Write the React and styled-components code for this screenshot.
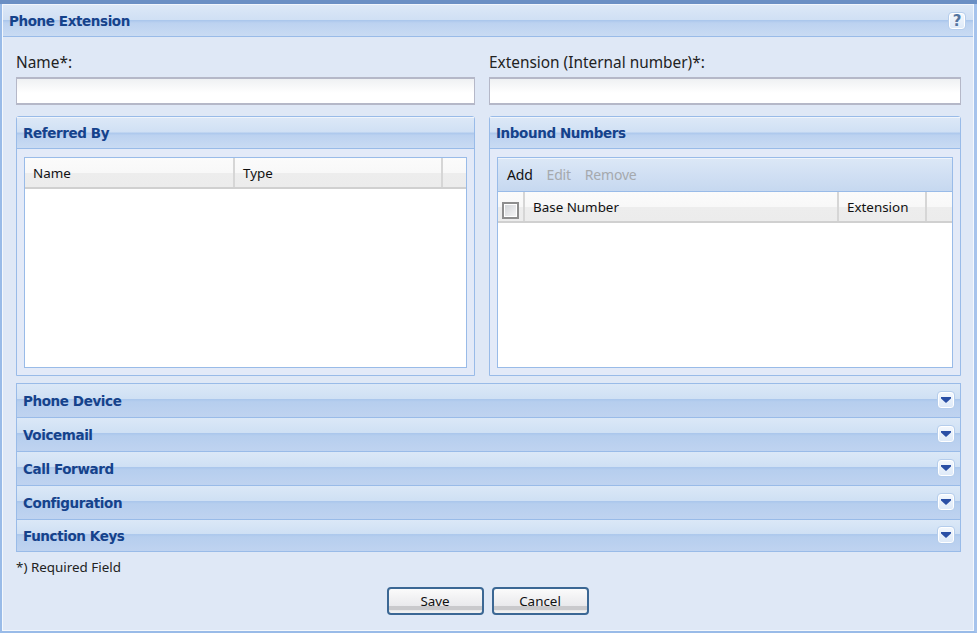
import React from "react";
import styled, { createGlobalStyle } from "styled-components";

const Global = createGlobalStyle`
  html, body { margin: 0; padding: 0; background: #dfe8f6; }
  body { width: 977px; height: 633px; overflow: hidden; font-family: "DejaVu Sans", sans-serif; }
`;
const headerBg = "linear-gradient(to bottom,#dce8f7 0%,#d0e0f4 47%,#abc7ec 50%,#bcd2f0 58%,#c9dbf3 100%)";

const Page = styled.div`
  width: 977px; height: 633px; box-sizing: border-box;
  border-top: 4px solid #6a8fc4;
  background: #dfe8f6;
`;
const Window = styled.div`
  height: 629px; box-sizing: border-box;
  border-left: 2px solid #99bbe8; border-right: 3px solid #a6c3ec; border-bottom: 2px solid #99bbe8;
  display: flex; flex-direction: column;
`;
const Frame = styled.div`
  flex: 1; box-sizing: border-box; display: flex; flex-direction: column;
  border-left: 1px solid #f4f8fd; border-right: 1px solid #f4f8fd; border-bottom: 1px solid #f4f8fd;
`;
const Header = styled.div`
  height: ${p => p.$h || 32}px; box-sizing: border-box; flex: none;
  display: flex; align-items: center; justify-content: space-between;
  padding: 0 ${p => p.$pr ?? 6}px 0 ${p => p.$pl ?? 6}px;
  background: ${headerBg};
  border-top: 1px solid #f0f5fc;
  border-bottom: 1px solid #99bbe8;
`;
const Title = styled.span`
  font: bold 13.5px "DejaVu Sans", sans-serif; color: #15428b; letter-spacing: -0.4px;
`;
const ToolIcon = styled.div`
  width: 18px; height: 18px; box-sizing: border-box; border-radius: 4px;
  border: 1px solid #b5cdec; background: linear-gradient(#f4f8fd,#dde9f8);
  box-shadow: inset 0 0 0 1px #ffffff;
  display: flex; align-items: center; justify-content: center;
  font: bold 15px "DejaVu Sans", sans-serif; color: #53749f;
`;
const ArrowIcon = styled(ToolIcon)`margin-bottom: 1px;`;
const Body = styled.div`
  flex: 1; display: flex; flex-direction: column; padding: 13px 0 0 13px;
`;
const Columns = styled.div`
  display: grid; grid-template-columns: 459px 472px; column-gap: 14px;
`;
const Field = styled.div`display: flex; flex-direction: column;`;
const Label = styled.label`
  font: 15.4px/25px "Noto Sans", sans-serif; height: 27px; color: #222;
`;
const Input = styled.div`
  height: 28px; box-sizing: border-box; border: 1px solid #b5b8c8; border-width: 2px 1px 2px 1px;
  background: linear-gradient(#eff1f3, #fff 14px);
`;
const Panel = styled.div`
  margin-top: 11px; height: 260px; box-sizing: border-box;
  border: 1px solid #99bbe8; border-radius: 3px 3px 0 0; display: flex; flex-direction: column;
`;
const PanelBody = styled.div`
  flex: 1; padding: 8px 7px 7px 7px; background: #e3eaf8; display: flex;
`;
const Grid = styled.div`
  flex: 1; background: #fff; border: 1px solid #99bbe8; display: flex; flex-direction: column;
`;
const Toolbar = styled.div`
  height: 34px; flex: none; box-sizing: border-box; display: flex; align-items: center; gap: 14px;
  padding: 0 0 2px 9px; background: linear-gradient(#dbe7f6,#c6d8f0); border-bottom: 1px solid #99bbe8;
  border-top: 1px solid #f0f5fc;
`;
const Tool = styled.span`
  font: 14px "Noto Sans", sans-serif; letter-spacing: -0.2px; color: ${p => p.$off ? "#a5a9ae" : "#111"};
`;
const HeadRow = styled.div`
  height: ${p => p.$h}px; flex: none; display: flex; box-sizing: border-box;
  background: linear-gradient(#fbfbfb 0%,#f8f8f8 50%,#ededed 52%,#ececec 100%);
  border-bottom: 2px solid #d0d0d0;
`;
const Col = styled.div`
  width: ${p => p.$w}px; ${p => p.$grow ? "flex:1;" : "flex:none;"} box-sizing: border-box;
  padding-left: ${p => p.$pl ?? 8}px; display: flex; align-items: center;
  border-right: ${p => p.$last ? "none" : "2px solid #d6d6d6"};
  font: 13.4px "Noto Sans", sans-serif; color: #111;
`;
const Check = styled.div`
  width: 17px; height: 17px; box-sizing: border-box; border: 2px solid #8e8e8e;
  background: linear-gradient(135deg,#cfd2d6,#f7f7f7); margin-top: 7px;
  box-shadow: inset 0 0 0 1px #fff;
`;
const Collapsed = styled.div`margin-top: 7px; width: 945px; display: flex; flex-direction: column;`;
const Bar = styled(Header)`
  height: 34px; border: 1px solid #99bbe8; border-bottom: 0;
  padding: 0 5px 0 6px;
  &:last-child { border-bottom: 1px solid #99bbe8; height: 33px; }
  background: linear-gradient(to bottom,#dbe8f7 0%,#cfe0f4 44%,#abc7ec 47%,#b6ceee 54%,#bfd3f0 100%);
`;
const Required = styled.div`
  font: 13.4px/16px "Noto Sans", sans-serif; color: #222; margin-top: 7px;
`;
const Footer = styled.div`
  display: flex; justify-content: center; gap: 8px; margin-top: 12px; width: 943px;
`;
const Button = styled.button`
  width: 97px; height: 28px; box-sizing: border-box; padding: 0;
  border: 2px solid #3b6794; border-radius: 4px;
  background: linear-gradient(#fbfbfb 0%,#e9e9ec 70%,#c9c9cc 72%,#c9c9cc 88%,#f0f0f0 90%);
  font: 13.4px "Noto Sans", sans-serif; color: #111;
`;

const Arrow = () => (
  <ArrowIcon>
    <svg width="10" height="6" viewBox="0 0 10 6"><path d="M0 0h10v1.5L5 6 0 1.5z" fill="#2a4fa5" /></svg>
  </ArrowIcon>
);

export default function App() {
  return (
    <Page>
      <Global />
      <Window>
        <Frame>
          <Header $h={33} $pl={6} $pr={7}>
            <Title>Phone Extension</Title>
            <ToolIcon>?</ToolIcon>
          </Header>
          <Body>
            <Columns>
              <Field><Label>Name*:</Label><Input /></Field>
              <Field><Label>Extension (Internal number)*:</Label><Input /></Field>
              <Panel>
                <Header><Title>Referred By</Title></Header>
                <PanelBody>
                  <Grid>
                    <HeadRow $h={31}>
                      <Col $w={210}>Name</Col>
                      <Col $w={208}>Type</Col>
                      <Col $grow $last />
                    </HeadRow>
                  </Grid>
                </PanelBody>
              </Panel>
              <Panel>
                <Header><Title>Inbound Numbers</Title></Header>
                <PanelBody>
                  <Grid>
                    <Toolbar>
                      <Tool>Add</Tool><Tool $off>Edit</Tool><Tool $off>Remove</Tool>
                    </Toolbar>
                    <HeadRow $h={31}>
                      <Col $w={27} $pl={4}><Check /></Col>
                      <Col $w={314}>Base Number</Col>
                      <Col $w={88}>Extension</Col>
                      <Col $grow $last />
                    </HeadRow>
                  </Grid>
                </PanelBody>
              </Panel>
            </Columns>
            <Collapsed>
              {["Phone Device", "Voicemail", "Call Forward", "Configuration", "Function Keys"].map(t => (
                <Bar key={t}><Title>{t}</Title><Arrow /></Bar>
              ))}
            </Collapsed>
            <Required>*) Required Field</Required>
            <Footer><Button>Save</Button><Button>Cancel</Button></Footer>
          </Body>
        </Frame>
      </Window>
    </Page>
  );
}
